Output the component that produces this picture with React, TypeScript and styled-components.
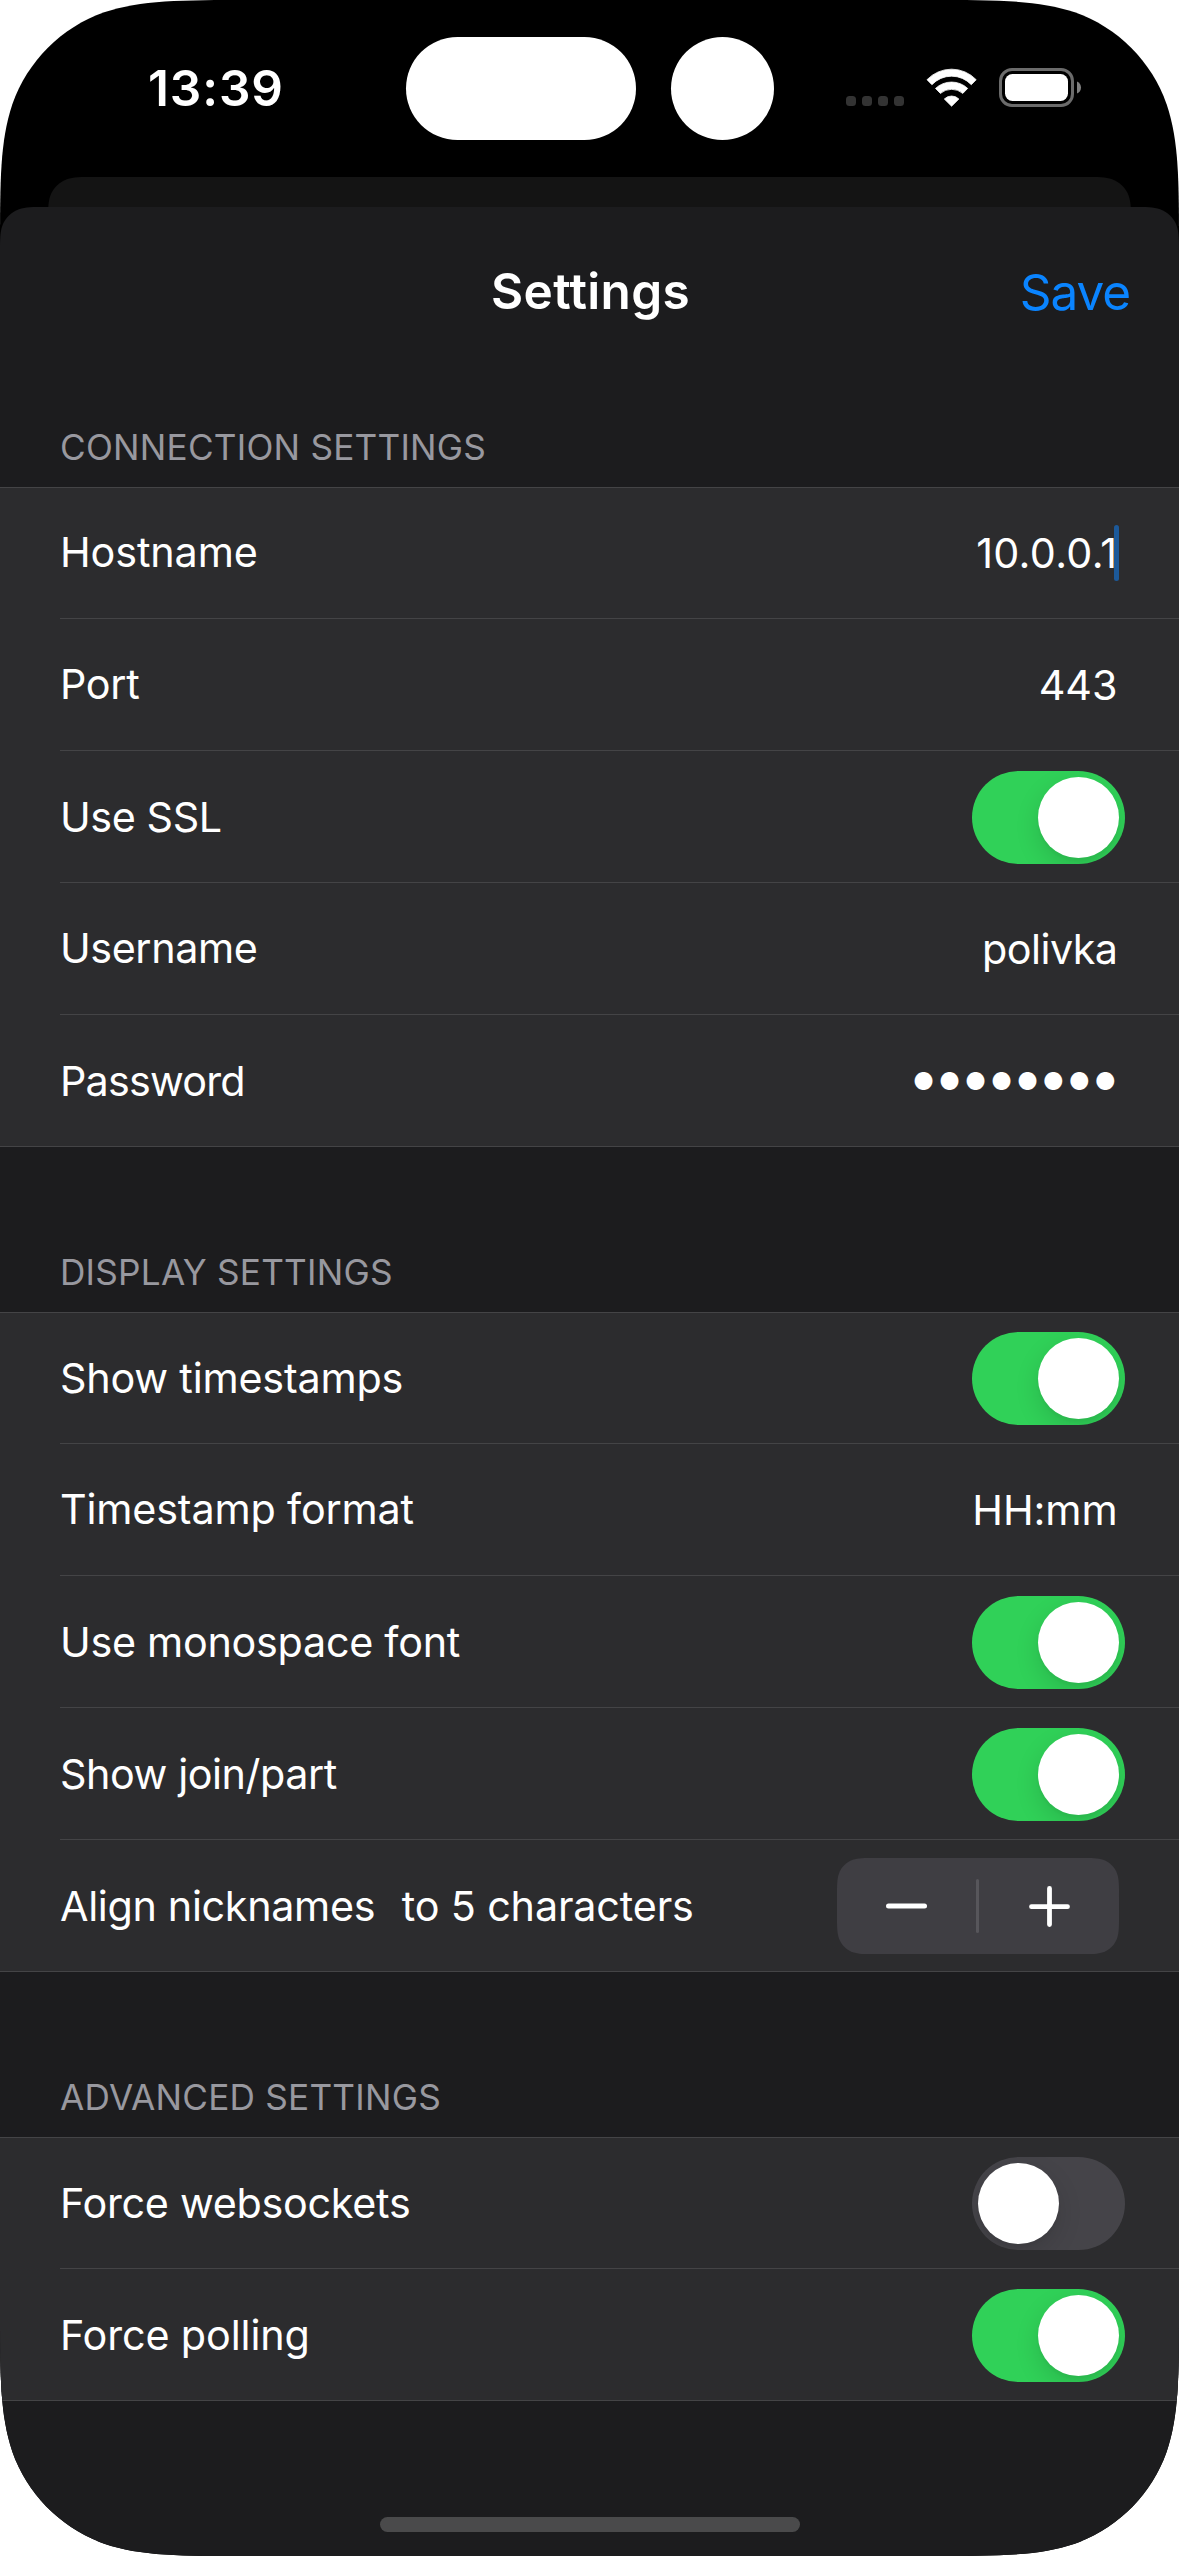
import React, { useState } from 'react';
import styled, { createGlobalStyle, css } from 'styled-components';

const SCREEN_W = 1179;
const SCREEN_H = 2556;

/* Continuous ("squircle") corner profile, expressed per unit of radius. */
const E = 1.528665;
const A = 1.08849296;
const B = 0.855;
const C = 0.63149379;
const D = 0.07491139;
const F = 0.37282383;
const G = 0.1655;

function squircle(w: number, h: number, top: number, bottom: number): string {
  const t = (k: number) => +(k * top).toFixed(2);
  const b = (k: number) => +(k * bottom).toFixed(2);
  const rt = (k: number) => +(w - k * top).toFixed(2);
  const rb = (k: number) => +(w - k * bottom).toFixed(2);
  const bb = (k: number) => +(h - k * bottom).toFixed(2);
  return [
    `M${t(E)} 0 L${rt(E)} 0`,
    `C${rt(A)} 0 ${rt(B)} 0 ${rt(C)} ${t(D)}`,
    `C${rt(F)} ${t(G)} ${rt(G)} ${t(F)} ${rt(D)} ${t(C)}`,
    `C${w} ${t(B)} ${w} ${t(A)} ${w} ${t(E)}`,
    `L${w} ${bb(E)}`,
    `C${w} ${bb(A)} ${w} ${bb(B)} ${rb(D)} ${bb(C)}`,
    `C${rb(G)} ${bb(F)} ${rb(F)} ${bb(G)} ${rb(C)} ${bb(D)}`,
    `C${rb(B)} ${h} ${rb(A)} ${h} ${rb(E)} ${h}`,
    `L${b(E)} ${h}`,
    `C${b(A)} ${h} ${b(B)} ${h} ${b(C)} ${bb(D)}`,
    `C${b(F)} ${bb(G)} ${b(G)} ${bb(F)} ${b(D)} ${bb(C)}`,
    `C0 ${bb(B)} 0 ${bb(A)} 0 ${bb(E)}`,
    `L0 ${t(E)}`,
    `C0 ${t(A)} 0 ${t(B)} ${t(D)} ${t(C)}`,
    `C${t(G)} ${t(F)} ${t(F)} ${t(G)} ${t(C)} ${t(D)}`,
    `C${t(B)} 0 ${t(A)} 0 ${t(E)} 0 Z`,
  ].join(' ');
}

const GlobalStyle = createGlobalStyle`
  *, *::before, *::after { box-sizing: border-box; }
  body {
    margin: 0;
    background: #fff;
    font-family: Inter, Roboto, "Liberation Sans", sans-serif;
    color: #fff;
  }
  button { font-family: inherit; border: 0; background: none; padding: 0; }
`;

const Screen = styled.div`
  display: flex;
  flex-direction: column;
  width: ${SCREEN_W}px;
  height: ${SCREEN_H}px;
  background: #000;
  clip-path: path('${squircle(SCREEN_W, SCREEN_H, 165, 165)}');
`;

const StatusBar = styled.header`
  display: flex;
  align-items: center;
  height: 177px;
  padding-left: 148px;
`;

const Clock = styled.time`
  width: 257.5px;
  padding-bottom: 1px;
  font-size: 49.5px;
  line-height: 60px;
  font-weight: 600;
  letter-spacing: 0.9px;
`;

const Island = styled.div<{ $width: number }>`
  flex: none;
  width: ${(p) => p.$width}px;
  height: 103px;
  margin-right: 35px;
  border-radius: 52px;
  background: #fff;
`;

const StatusIcons = styled.div`
  display: flex;
  align-items: flex-start;
  height: 41px;
  margin-left: 37.5px;
`;

const SignalDots = styled.div`
  display: flex;
  gap: 6px;
  width: 80px;
  padding-top: 28px;
`;

const SignalDot = styled.i`
  width: 10px;
  height: 10px;
  border-radius: 3.5px;
  background: #333;
`;

const WifiGlyph = styled.svg`
  display: block;
  width: 51px;
  height: 39px;
  margin-right: 22px;
`;

const BatteryGlyph = styled.svg`
  display: block;
  width: 83px;
  height: 39px;
`;

const BackSheet = styled.div`
  height: 30px;
  margin: 0 48px;
  background: #141414;
  clip-path: path('${squircle(SCREEN_W - 96, 90, 30, 0)}');
`;

const Sheet = styled.main`
  display: flex;
  flex-direction: column;
  flex: 1;
  background: #1c1c1e;
  clip-path: path('${squircle(SCREEN_W, SCREEN_H - 207, 30, 0)}');
`;

const NavBar = styled.div`
  display: grid;
  grid-template-columns: 1fr auto 1fr;
  align-items: center;
  height: 168px;
  padding: 0 49px;
  font-size: 49.5px;
  line-height: 60px;
`;

const Title = styled.h1`
  grid-column: 2;
  margin: 0;
  padding-left: 2px;
  font-size: inherit;
  font-weight: 600;
  letter-spacing: 0.35px;
`;

const SaveButton = styled.button`
  justify-self: end;
  padding-top: 2px;
  font-size: inherit;
  line-height: inherit;
  letter-spacing: -1.1px;
  color: #0a84ff;
`;

const Section = styled.section`
  & + & {
    padding-top: 53px;
  }
`;

const SectionTitle = styled.h2`
  display: flex;
  align-items: flex-end;
  height: 112px;
  margin: 0;
  padding: 0 60px 18px;
  font-size: 35.2px;
  line-height: 44px;
  font-weight: 400;
  letter-spacing: 0.22px;
  color: #98989f;
`;

const Group = styled.div`
  border: solid #444446;
  border-width: 1px 0;
  background: #2c2c2e;
`;

const Row = styled.div`
  display: flex;
  align-items: center;
  justify-content: space-between;
  height: 132px;
  margin-left: 60px;
  padding: 2px 60px 0 0;
  border-bottom: 1px solid #444446;
  font-size: 41.3px;
  line-height: 50px;

  &:first-child {
    height: 131px;
    padding-top: 1px;
  }

  &:last-child {
    height: 131px;
    border-bottom: 0;
  }
`;

const Label = styled.span<{ $tracking?: number; $centered?: boolean }>`
  padding-bottom: ${(p) => (p.$centered ? 1 : 3)}px;
  letter-spacing: ${(p) => p.$tracking ?? -0.2}px;
  white-space: pre;
`;

const LabelGroup = styled.span`
  display: flex;
  gap: 26.5px;
`;

const Value = styled.span<{ $tracking?: number }>`
  position: relative;
  margin-right: 1.5px;
  padding-bottom: 1px;
  letter-spacing: ${(p) => p.$tracking ?? 0}px;
`;

const Secret = styled.span`
  margin-right: -1.5px;
  font-size: 23.6px;
  line-height: 30px;
  letter-spacing: 4.4px;
`;

const Caret = styled.i`
  position: absolute;
  right: -1.5px;
  top: -3px;
  width: 5px;
  height: 56px;
  border-radius: 2.5px;
  background: #1c5999;
`;

const Track = styled.button<{ $on: boolean }>`
  display: flex;
  flex: none;
  align-items: center;
  width: 153px;
  height: 93px;
  margin-right: -6px;
  padding: 6px;
  border-radius: 46.5px;
  overflow: hidden;
  background: #454449;
  ${(p) =>
    p.$on &&
    css`
      justify-content: flex-end;
      background: #30d158;
    `}
`;

const Knob = styled.span`
  width: 81px;
  height: 81px;
  border-radius: 50%;
  background: #fff;
  box-shadow: 0 9px 24px rgba(0, 0, 0, 0.13), 0 3px 3px rgba(0, 0, 0, 0.03);
`;

const StepperBox = styled.div`
  display: flex;
  align-items: center;
  width: 282px;
  height: 96px;
  margin-bottom: 1px;
  background: #3f3e43;
  clip-path: path('${squircle(282, 96, 25, 25)}');
`;

const StepButton = styled.button<{ $width: number }>`
  display: flex;
  align-items: center;
  justify-content: center;
  width: ${(p) => p.$width}px;
  height: 96px;
`;

const StepDivider = styled.i`
  width: 3px;
  height: 54px;
  border-radius: 1.5px;
  background: #57565b;
`;

const StepGlyph = styled.svg<{ $shift: number }>`
  display: block;
  width: 41px;
  height: 41px;
  margin-left: ${(p) => p.$shift}px;
`;

const HomeIndicator = styled.div`
  flex: none;
  width: 420px;
  height: 15px;
  margin: auto auto 24px 380px;
  border-radius: 8px;
  background: #4a4a4b;
`;

function Wifi() {
  return (
    <WifiGlyph viewBox="0 0 51 39" fill="#fff" stroke="#fff" strokeWidth="0.8" strokeLinejoin="round">
      <path d="M1 11.7A34 34 0 0 1 50.2 11.7L45.3 16.7A27 27 0 0 0 5.9 16.7Z" />
      <path d="M9.5 20.4A23.6 23.6 0 0 1 41.7 20.4L36.8 25.4A17.3 17.3 0 0 0 14.4 25.4Z" />
      <path d="M18.3 31A10.4 10.4 0 0 1 32.9 31L25.6 38.2Z" />
    </WifiGlyph>
  );
}

function Battery() {
  return (
    <BatteryGlyph viewBox="0 0 83 39">
      <rect x="1.5" y="1.5" width="72" height="36" rx="11.5" fill="none" stroke="#6b6b6b" strokeWidth="3" />
      <rect x="6" y="6" width="63" height="27" rx="7.5" fill="#fff" />
      <path d="M78 13.4C80.6 14.5 82 16.8 82 19.5S80.6 24.5 78 25.6Z" fill="#808080" />
    </BatteryGlyph>
  );
}

function Switch({ initial = true, label }: { initial?: boolean; label: string }) {
  const [on, setOn] = useState(initial);
  return (
    <Track $on={on} role="switch" aria-checked={on} aria-label={label} onClick={() => setOn(!on)}>
      <Knob />
    </Track>
  );
}

function SwitchRow({ label, tracking, initial }: { label: string; tracking?: number; initial?: boolean }) {
  return (
    <Row>
      <Label $tracking={tracking} $centered>
        {label}
      </Label>
      <Switch label={label} initial={initial} />
    </Row>
  );
}

function Stepper({ onChange }: { onChange: (delta: number) => void }) {
  return (
    <StepperBox>
      <StepButton $width={139} aria-label="Decrement" onClick={() => onChange(-1)}>
        <StepGlyph $shift={0} viewBox="0 0 41 41" stroke="#fff" strokeWidth="5" strokeLinecap="round">
          <path d="M2.5 20H38.5" />
        </StepGlyph>
      </StepButton>
      <StepDivider />
      <StepButton $width={140} aria-label="Increment" onClick={() => onChange(1)}>
        <StepGlyph $shift={1} viewBox="0 0 41 41" stroke="#fff" strokeWidth="4.8" strokeLinecap="round">
          <path d="M2.5 20.7H38.5M20.5 2.5V38.5" />
        </StepGlyph>
      </StepButton>
    </StepperBox>
  );
}

export default function App() {
  const [columns, setColumns] = useState(5);

  return (
    <>
      <GlobalStyle />
      <Screen>
        <StatusBar>
          <Clock>13:39</Clock>
          <Island $width={230.5} />
          <Island $width={102.5} />
          <StatusIcons>
            <SignalDots>
              {[0, 1, 2, 3].map((n) => (
                <SignalDot key={n} />
              ))}
            </SignalDots>
            <Wifi />
            <Battery />
          </StatusIcons>
        </StatusBar>
        <BackSheet />
        <Sheet>
          <NavBar>
            <Title>Settings</Title>
            <SaveButton>Save</SaveButton>
          </NavBar>

          <Section>
            <SectionTitle>CONNECTION SETTINGS</SectionTitle>
            <Group>
              <Row>
                <Label $tracking={-0.11}>Hostname</Label>
                <Value $tracking={0.34}>
                  10.0.0.1
                  <Caret />
                </Value>
              </Row>
              <Row>
                <Label $tracking={-0.3}>Port</Label>
                <Value>443</Value>
              </Row>
              <SwitchRow label="Use SSL" tracking={-0.4} />
              <Row>
                <Label $tracking={-0.41}>Username</Label>
                <Value $tracking={-0.55}>polivka</Value>
              </Row>
              <Row>
                <Label $tracking={-0.78} $centered>
                  Password
                </Label>
                <Secret>●●●●●●●●</Secret>
              </Row>
            </Group>
          </Section>

          <Section>
            <SectionTitle>DISPLAY SETTINGS</SectionTitle>
            <Group>
              <SwitchRow label="Show timestamps" tracking={-0.2} />
              <Row>
                <Label $tracking={-0.17}>Timestamp format</Label>
                <Value $tracking={-0.1}>HH:mm</Value>
              </Row>
              <SwitchRow label="Use monospace font" tracking={-0.28} />
              <SwitchRow label="Show join/part" tracking={-0.44} />
              <Row>
                <LabelGroup>
                  <Label $tracking={-0.33} $centered>
                    Align nicknames
                  </Label>
                  <Label $tracking={-0.15} $centered>
                    to {columns} characters
                  </Label>
                </LabelGroup>
                <Stepper onChange={(delta) => setColumns((n) => Math.max(0, n + delta))} />
              </Row>
            </Group>
          </Section>

          <Section>
            <SectionTitle>ADVANCED SETTINGS</SectionTitle>
            <Group>
              <SwitchRow label="Force websockets" tracking={-0.28} initial={false} />
              <SwitchRow label="Force polling" tracking={-0.13} />
            </Group>
          </Section>

          <HomeIndicator />
        </Sheet>
      </Screen>
    </>
  );
}
